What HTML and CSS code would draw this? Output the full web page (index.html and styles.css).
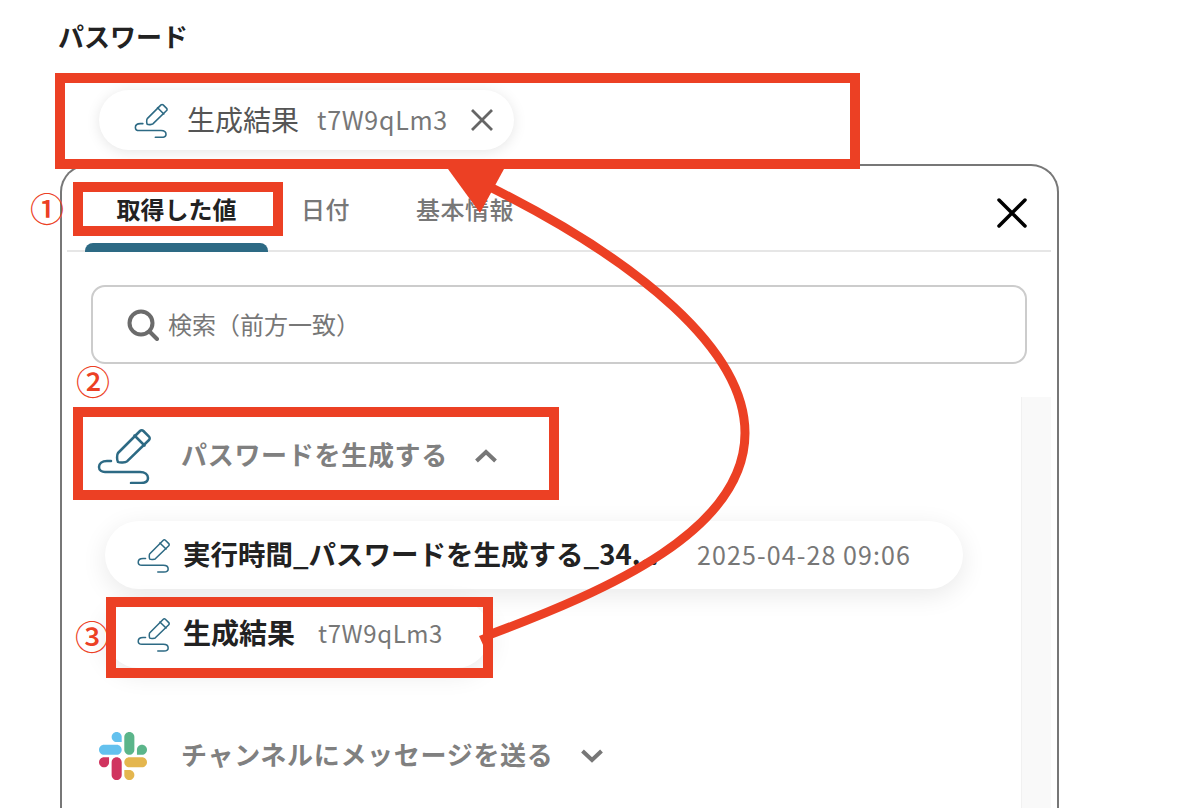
FILE: index.html
```html
<!DOCTYPE html>
<html lang="ja">
<head>
  <meta charset="UTF-8" />
  <meta name="viewport" content="width=device-width, initial-scale=1.0" />
  <title>パスワード</title>
  <link rel="stylesheet" href="styles.css">
</head>
<body>
  <svg class="defs" width="0" height="0">
    <symbol id="pen" viewBox="0 0 54 56">
      <path d="M21 25 43 3a2.4 2.4 0 0 1 3.4 0l5.6 5.6a2.4 2.4 0 0 1 0 3.4L30 33.400c-1.500 1.300-7 1.600-9 .6-1.200-2-1.300-7.200 0-9z" />
      <path d="M37.500 7.500 47.500 17.500" />
      <path d="M14 33H10C5 33 2 35.500 2 39C2 42.500 5 44 8 44H43C48 44 51 46.500 51 50C51 53.500 48 55 44 55H34" />
    </symbol>
  </svg>

  <div class="page">
    <h1 class="field-label">パスワード</h1>

    <div class="value-row">
      <div class="chip-value">
        <svg class="pen pen-small"><use href="#pen" /></svg>
        <span class="chip-value-name">生成結果</span>
        <span class="chip-value-text">t7W9qLm3</span>
        <svg class="chip-value-close" viewBox="0 0 22 22"><path d="M1 1 21 21M21 1 1 21" /></svg>
      </div>
    </div>

    <div class="modal">
      <div class="tabs">
        <div class="tab tab-active">取得した値</div>
        <div class="tab">日付</div>
        <div class="tab">基本情報</div>
        <svg class="modal-close" viewBox="0 0 30 30"><path d="M2 2 28 28M28 2 2 28" /></svg>
      </div>

      <div class="search">
        <svg class="search-icon" viewBox="0 0 32 32"><circle cx="14" cy="14" r="11.500" /><path d="M22.500 22.500 30 30" /></svg>
        <span>検索（前方一致）</span>
      </div>

      <div class="modal-body">
        <div class="list">
          <div class="group-head">
            <svg class="pen pen-large"><use href="#pen" /></svg>
            <span class="group-title">パスワードを生成する</span>
            <svg class="chevron" viewBox="0 0 24 14"><path d="M2.500 12 12 3 21.500 12" /></svg>
          </div>

          <div class="chip chip-wide">
            <svg class="pen pen-item"><use href="#pen" /></svg>
            <span class="chip-name chip-name-cut">実行時間_パスワードを生成する_34...</span>
            <span class="chip-date">2025-04-28 09:06</span>
          </div>
          <div class="chip">
            <svg class="pen pen-item"><use href="#pen" /></svg>
            <span class="chip-name">生成結果</span>
            <span class="chip-text">t7W9qLm3</span>
          </div>

          <div class="group-head group-slack">
            <svg class="slack" viewBox="0 0 122.800 122.800">
              <path class="s-red" d="M25.800 77.600c0 7.100-5.800 12.900-12.900 12.900S0 84.700 0 77.600s5.800-12.900 12.900-12.900h12.900v12.900z" />
              <path class="s-red" d="M32.300 77.600c0-7.100 5.800-12.900 12.900-12.900s12.900 5.800 12.900 12.900v32.300c0 7.100-5.800 12.900-12.900 12.900s-12.900-5.800-12.900-12.900V77.600z" />
              <path class="s-blue" d="M45.200 25.800c-7.100 0-12.900-5.800-12.900-12.900S38.100 0 45.200 0s12.900 5.800 12.900 12.900v12.900H45.200z" />
              <path class="s-blue" d="M45.200 32.300c7.100 0 12.900 5.800 12.900 12.900s-5.800 12.900-12.900 12.900H12.900C5.800 58.100 0 52.300 0 45.200s5.800-12.900 12.900-12.900h32.300z" />
              <path class="s-green" d="M97 45.200c0-7.100 5.800-12.900 12.900-12.900s12.900 5.800 12.900 12.900-5.800 12.900-12.900 12.900H97V45.200z" />
              <path class="s-green" d="M90.500 45.200c0 7.100-5.800 12.900-12.900 12.900s-12.900-5.800-12.900-12.900V12.900C64.700 5.800 70.500 0 77.600 0s12.900 5.800 12.900 12.900v32.300z" />
              <path class="s-yellow" d="M77.600 97c7.100 0 12.900 5.800 12.900 12.900s-5.800 12.900-12.900 12.900-12.900-5.800-12.900-12.900V97h12.900z" />
              <path class="s-yellow" d="M77.600 90.500c-7.100 0-12.900-5.800-12.900-12.900s5.800-12.900 12.900-12.900h32.300c7.100 0 12.900 5.800 12.900 12.900s-5.800 12.900-12.900 12.900H77.600z" />
            </svg>
            <span class="group-title">チャンネルにメッセージを送る</span>
            <svg class="chevron" viewBox="0 0 24 14"><path d="M2.500 2 12 11 21.500 2" /></svg>
          </div>
        </div>
        <div class="scroll-track"></div>
      </div>
    </div>

    <!-- red notes drawn on top of the screenshot -->
    <div class="mark mark-value"></div>
    <div class="mark mark-tab"></div>
    <div class="mark mark-group"></div>
    <div class="mark mark-item"></div>
    <span class="step step-1">①</span>
    <span class="step step-2">②</span>
    <span class="step step-3">③</span>
    <svg class="arrow" viewBox="0 0 1178 808">
      <path class="arrow-line" d="M490 187C640 262 745 350 745 433C745 530 610 590 486 636" />
      <path class="arrow-head" d="M448 169H504L480 213Z" />
      <path class="arrow-head" d="M479 636 487 633 490 647 484 647Z" />
    </svg>
  </div>
</body>
</html>
```

FILE: styles.css
```css
* {
    margin: 0;
    padding: 0;
    box-sizing: border-box;
}

body {
    font-family: "Noto Sans CJK JP", "Noto Sans", sans-serif;
    background: #ffffff;
    color: #222222;
}

.defs {
    position: absolute;
}

.page {
    position: relative;
    width: 1178px;
    height: 808px;
    overflow: hidden;
    padding-left: 60px;
}

.field-label {
    margin: 18px 0 0 -2px;
    font-size: 26px;
    font-weight: 700;
    line-height: 36px;
}

.pen {
    flex: none;
    fill: none;
    stroke: #2d6a84;
    stroke-linecap: round;
    stroke-linejoin: round;
    stroke-width: 2.500px;
}

.pen-small {
    width: 34px;
    height: 35px;
}

.pen-item {
    width: 33px;
    height: 35px;
}

.pen-large {
    width: 54px;
    height: 56px;
}

/* selected value */
.value-row {
    display: flex;
    margin-top: 36px;
    padding-left: 39px;
}

.chip-value {
    display: flex;
    align-items: center;
    height: 60px;
    padding: 0 21px 0 35px;
    border-radius: 30px;
    background: #ffffff;
    box-shadow: 0 2px 14px rgba(0, 0, 0, 0.1);
}

.chip-value-name {
    margin: -3px 0 0 19px;
    font-size: 28px;
    color: #555555;
}

.chip-value-text {
    margin: -3px 0 0 18px;
    font-size: 25px;
    letter-spacing: 0.7px;
    color: #777777;
}

.chip-value-close {
    width: 22px;
    height: 22px;
    margin-left: 23px;
    fill: none;
    stroke: #666666;
    stroke-width: 2.800px;
}

/* modal */
.modal {
    width: 999px;
    height: 644px;
    margin-top: 14px;
    padding: 0 6px 0 5px;
    background: #ffffff;
    border: 2px solid #777777;
    border-bottom: none;
    border-radius: 28px 28px 0 0;
}

.tabs {
    display: flex;
    align-items: flex-start;
    height: 86px;
    padding-left: 18px;
    border-bottom: 2px solid #e6e6e6;
}

.tab {
    position: relative;
    height: 84px;
    padding: 25px 33px 0;
    font-size: 24px;
    font-weight: 500;
    letter-spacing: 0.5px;
    line-height: 36px;
    color: #777777;
}

.tab-active {
    width: 183px;
    padding: 25px 0 0;
    text-align: center;
    font-weight: 700;
    letter-spacing: 0;
    color: #222222;
}

.tab-active::after {
    content: "";
    position: absolute;
    left: 0;
    right: 0;
    bottom: -2px;
    height: 9px;
    border-radius: 8px 8px 0 0;
    background: #2d6a84;
}

.modal-close {
    width: 30px;
    height: 30px;
    margin: 32px 24px 0 auto;
    fill: none;
    stroke: #000000;
    stroke-width: 3.500px;
    stroke-linecap: round;
}

.search {
    display: flex;
    align-items: center;
    gap: 9px;
    height: 79px;
    margin: 33px 24px 0 24px;
    padding: 0 0 2px 34px;
    border: 2px solid #cccccc;
    border-radius: 14px;
    font-size: 24px;
    color: #777777;
}

.search-icon {
    width: 32px;
    height: 32px;
    margin-top: 2px;
    fill: none;
    stroke: #6b6b6b;
    stroke-width: 4px;
    stroke-linecap: round;
}

.modal-body {
    display: flex;
    height: 411px;
    margin-top: 33px;
}

.list {
    flex: 1;
    padding-top: 31px;
}

.scroll-track {
    width: 30px;
    background: #f9f9f9;
    border-left: 1px solid #f1f1f1;
}

.group-head {
    display: flex;
    align-items: center;
    padding-left: 30px;
}

.group-title {
    margin: -5px 0 0 30px;
    font-size: 26px;
    font-weight: 700;
    letter-spacing: 0.7px;
    color: #808080;
}

.chevron {
    width: 24px;
    height: 14px;
    margin-left: 26px;
    fill: none;
    stroke: #777777;
    stroke-width: 4px;
}

.chip {
    display: flex;
    align-items: center;
    width: 385px;
    height: 68px;
    margin: 11px 0 0 38px;
    padding-left: 32px;
    border-radius: 34px;
    background: #ffffff;
    box-shadow: 0 6px 26px rgba(0, 0, 0, 0.09);
}

.chip-wide {
    width: 858px;
    margin-top: 37px;
}

.chip-name {
    flex: none;
    margin: -4px 0 0 13px;
    font-size: 28px;
    font-weight: 700;
    color: #222222;
}

.chip-name-cut {
    width: 479px;
    font-size: 27.500px;
    white-space: nowrap;
}

.chip-date {
    margin: -3px 0 0 35px;
    font-size: 25px;
    letter-spacing: 1.100px;
    color: #777777;
}

.chip-text {
    margin: -3px 0 0 23px;
    font-size: 24px;
    letter-spacing: 0.6px;
    color: #777777;
}

.group-slack {
    margin-top: 64px;
    padding-left: 32px;
}

.group-slack .group-title {
    margin-left: 34px;
}

.slack {
    width: 48px;
    height: 48px;
}

.s-red { fill: #d0345f; }
.s-blue { fill: #63c1ee; }
.s-green { fill: #5bb58a; }
.s-yellow { fill: #e4b64e; }

/* annotations */
.mark {
    position: absolute;
    border: 10px solid #ec4024;
}

.mark-value {
    left: 55px;
    top: 73px;
    width: 805px;
    height: 96px;
}

.mark-tab {
    left: 73px;
    top: 182px;
    width: 210px;
    height: 54px;
}

.mark-group {
    left: 73px;
    top: 407px;
    width: 486px;
    height: 93px;
}

.mark-item {
    left: 106px;
    top: 597px;
    width: 387px;
    height: 81px;
}

.step {
    position: absolute;
    font-size: 34px;
    font-weight: 500;
    line-height: 34px;
    color: #ec4024;
}

.step-1 {
    left: 30px;
    top: 191px;
}

.step-2 {
    left: 76px;
    top: 364px;
}

.step-3 {
    left: 75px;
    top: 619px;
}

.arrow {
    position: absolute;
    left: 0;
    top: 0;
    width: 1178px;
    height: 808px;
    pointer-events: none;
}

.arrow-line {
    fill: none;
    stroke: #ec4024;
    stroke-width: 9px;
}

.arrow-head {
    fill: #ec4024;
}
```
